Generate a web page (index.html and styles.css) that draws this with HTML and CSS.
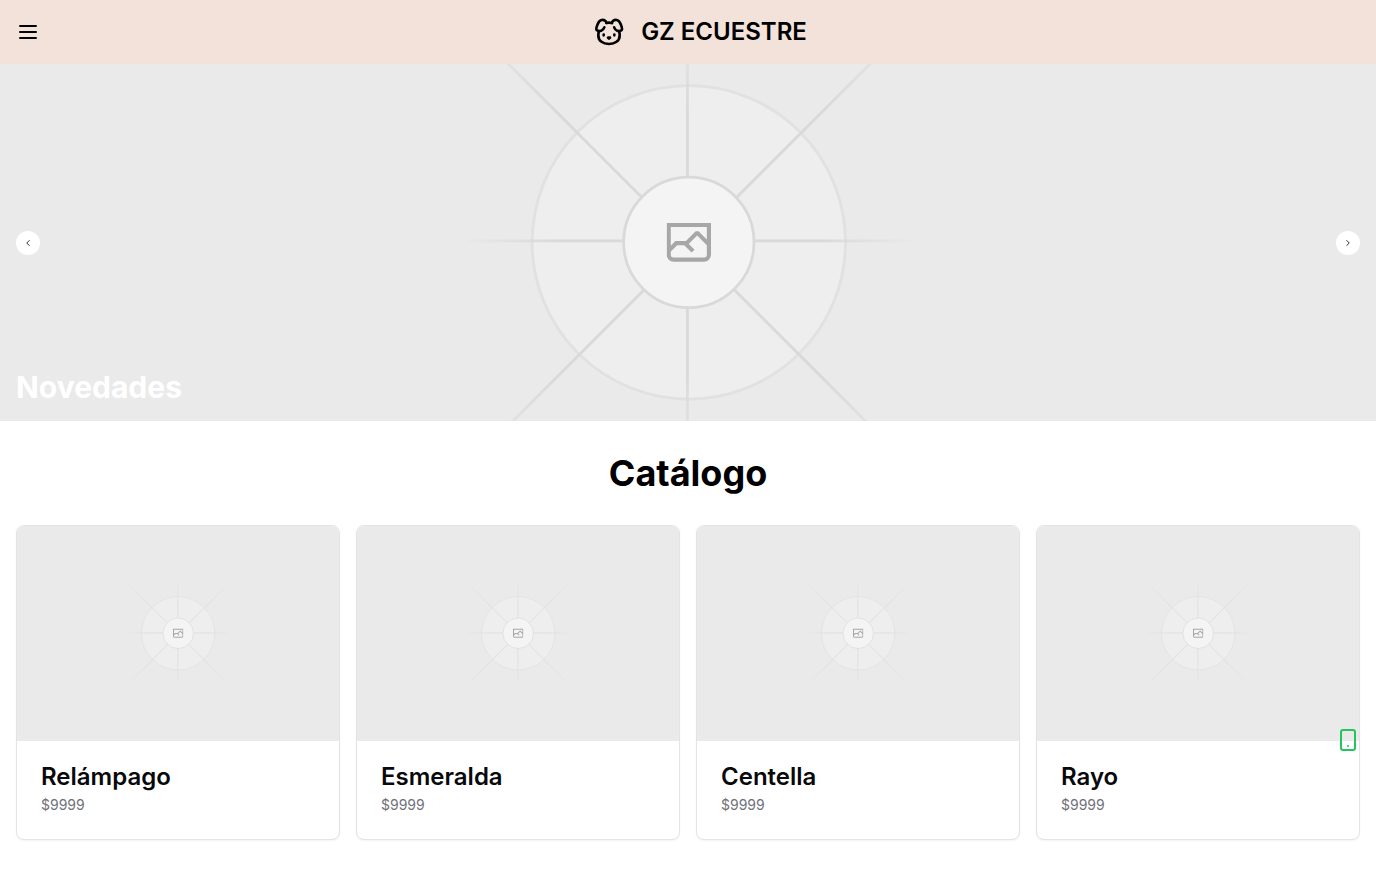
FILE: index.html
```html
<!DOCTYPE html>
<html lang="es">
<head>
<meta charset="utf-8">
<meta name="viewport" content="width=device-width, initial-scale=1">
<title>GZ Ecuestre</title>
<link rel="stylesheet" href="styles.css">
</head>
<body>
<svg class="sprite" aria-hidden="true">
  <defs>
    <linearGradient id="ray-a" x1="405" x2="797" y1="797" y2="405" gradientUnits="userSpaceOnUse"><stop stop-color="#c9c9c9" stop-opacity="0"/><stop offset=".208" stop-color="#c9c9c9"/><stop offset=".792" stop-color="#c9c9c9"/><stop offset="1" stop-color="#c9c9c9" stop-opacity="0"/></linearGradient>
    <linearGradient id="ray-b" x1="796.912" x2="404.507" y1="599.963" y2="599.965" gradientUnits="userSpaceOnUse"><stop stop-color="#c9c9c9" stop-opacity="0"/><stop offset=".208" stop-color="#c9c9c9"/><stop offset=".792" stop-color="#c9c9c9"/><stop offset="1" stop-color="#c9c9c9" stop-opacity="0"/></linearGradient>
    <linearGradient id="ray-c" x1="600.792" x2="600.794" y1="403.677" y2="796.082" gradientUnits="userSpaceOnUse"><stop stop-color="#c9c9c9" stop-opacity="0"/><stop offset=".208" stop-color="#c9c9c9"/><stop offset=".792" stop-color="#c9c9c9"/><stop offset="1" stop-color="#c9c9c9" stop-opacity="0"/></linearGradient>
    <linearGradient id="ray-d" x1="404.85" x2="796.972" y1="403.903" y2="796.02" gradientUnits="userSpaceOnUse"><stop stop-color="#c9c9c9" stop-opacity="0"/><stop offset=".208" stop-color="#c9c9c9"/><stop offset=".792" stop-color="#c9c9c9"/><stop offset="1" stop-color="#c9c9c9" stop-opacity="0"/></linearGradient>
    <clipPath id="picture-clip"><path d="M581.364 580.535h38.689v38.689h-38.689z"/></clipPath>
  </defs>
  <g id="placeholder" fill="none">
    <rect width="1200" height="1200" fill="#eaeaea"/>
    <g opacity=".5">
      <g opacity=".5"><circle cx="600.709" cy="599.88" r="136.62" fill="#fafafa" stroke="#c9c9c9" stroke-width="2.418"/></g>
      <g stroke-width="2.418">
        <path stroke="url(#ray-a)" d="M405.8 797.2 797.2 405.8"/>
        <path stroke="url(#ray-b)" d="M404.846 598.671h391.726"/>
        <path stroke="url(#ray-c)" d="M599.5 795.742V404.017"/>
        <path stroke="url(#ray-d)" d="m795.717 796.597-391.441-391.44"/>
      </g>
      <circle cx="600.709" cy="599.88" r="56.825" fill="#fff" stroke="#c9c9c9" stroke-width="2.418"/>
      <g clip-path="url(#picture-clip)"><path fill="#666" fill-rule="evenodd" d="M616.426 586.58h-31.434v16.176l3.553-3.554.531-.531h9.068l.074-.074 8.463-8.463h2.565l7.18 7.181V586.58Zm-15.715 14.654 3.698 3.699 1.283 1.282-2.565 2.565-1.282-1.283-5.2-5.199h-6.066l-5.514 5.514-.073.073v2.876a2.418 2.418 0 0 0 2.418 2.418h26.598a2.418 2.418 0 0 0 2.418-2.418v-8.317l-8.463-8.463-7.181 7.181-.071.072Zm-19.347 5.442v4.085a6.045 6.045 0 0 0 6.046 6.045h26.598a6.044 6.044 0 0 0 6.045-6.045v-7.108l1.356-1.355-1.282-1.283-.074-.073v-17.989h-38.689v23.43l-.146.146.146.147Z"/></g>
    </g>
  </g>
</svg>

<header class="header">
  <button class="icon-button" type="button" aria-label="Abrir menú">
    <svg class="icon" viewBox="0 0 24 24"><path d="M4 12h16M4 6h16M4 18h16"/></svg>
  </button>
  <div class="brand">
    <svg class="icon brand-logo" viewBox="0 0 24 24" aria-hidden="true"><path d="M10 5.172C10 3.782 8.423 2.679 6.5 3c-2.823.47-4.113 6.006-4 7 .08.703 1.725 1.722 3.656 1 1.261-.472 1.96-1.45 2.344-2.5"/><path d="M14.267 5.172c0-1.39 1.577-2.493 3.5-2.172 2.823.47 4.113 6.006 4 7-.08.703-1.725 1.722-3.656 1-1.261-.472-1.855-1.45-2.239-2.5"/><path d="M8 14v.5M16 14v.5"/><path d="M11.25 16.25h1.5L12 17l-.75-.75Z"/><path d="M4.42 11.247A13.152 13.152 0 0 0 4 14.556C4 18.728 7.582 21 12 21s8-2.272 8-6.444c0-1.061-.162-2.2-.493-3.309m-9.243-6.082A8.801 8.801 0 0 1 12 5c.78 0 1.5.108 2.161.306"/></svg>
    <span class="brand-name">GZ ECUESTRE</span>
  </div>
  <div></div>
</header>

<main>
  <section class="hero" aria-label="Novedades">
    <svg class="hero-image" viewBox="0 0 1200 1200" preserveAspectRatio="xMidYMid slice" aria-hidden="true"><use href="#placeholder"/></svg>
    <div class="hero-controls">
      <button class="arrow" type="button" aria-label="Anterior"><svg class="icon arrow-icon" viewBox="0 0 24 24"><path d="m15 18-6-6 6-6"/></svg></button>
      <button class="arrow" type="button" aria-label="Siguiente"><svg class="icon arrow-icon" viewBox="0 0 24 24"><path d="m9 18 6-6-6-6"/></svg></button>
    </div>
    <h2 class="hero-title">Novedades</h2>
  </section>

  <section class="catalog">
    <h1 class="catalog-title">Catálogo</h1>
    <div class="grid">
      <article class="card">
        <svg class="card-image" viewBox="0 0 1200 1200" preserveAspectRatio="xMidYMid slice" aria-hidden="true"><use href="#placeholder"/></svg>
        <div class="card-body"><h3 class="card-title">Relámpago</h3><p class="price">$9999</p></div>
      </article>
      <article class="card">
        <svg class="card-image" viewBox="0 0 1200 1200" preserveAspectRatio="xMidYMid slice" aria-hidden="true"><use href="#placeholder"/></svg>
        <div class="card-body"><h3 class="card-title">Esmeralda</h3><p class="price">$9999</p></div>
      </article>
      <article class="card">
        <svg class="card-image" viewBox="0 0 1200 1200" preserveAspectRatio="xMidYMid slice" aria-hidden="true"><use href="#placeholder"/></svg>
        <div class="card-body"><h3 class="card-title">Centella</h3><p class="price">$9999</p></div>
      </article>
      <article class="card">
        <svg class="card-image" viewBox="0 0 1200 1200" preserveAspectRatio="xMidYMid slice" aria-hidden="true"><use href="#placeholder"/></svg>
        <div class="card-body"><h3 class="card-title">Rayo</h3><p class="price">$9999</p></div>
      </article>
    </div>
  </section>
</main>

<a class="contact" href="#contacto" aria-label="Contacto">
  <svg class="icon" viewBox="0 0 24 24"><rect x="5" y="2" width="14" height="20" rx="2"/><path d="M12 18h.01"/></svg>
</a>
</body>
</html>
```

FILE: styles.css
```css
* {
  box-sizing: border-box;
}

body,
h1,
h2,
h3,
p {
  margin: 0;
}

body {
  background: #fff;
  color: #09090b;
  font-family: Inter, "Liberation Sans", sans-serif;
  font-size: 16px;
  line-height: 24px;
}

button {
  padding: 0;
  border: 0;
  color: inherit;
  cursor: pointer;
}

.sprite {
  position: absolute;
  width: 0;
  height: 0;
}

.icon {
  display: block;
  width: 24px;
  height: 24px;
  fill: none;
  stroke: currentColor;
  stroke-width: 2;
  stroke-linecap: round;
  stroke-linejoin: round;
}

.header {
  display: flex;
  align-items: center;
  justify-content: space-between;
  min-height: 64px;
  padding: 16px;
  background: #f3e2da;
  color: #000;
}

.icon-button {
  background: none;
}

.brand {
  display: flex;
  align-items: center;
  gap: 16px;
}

.brand-logo {
  width: 32px;
  height: 32px;
}

.brand-name {
  font-size: 24px;
  font-weight: 600;
  line-height: 32px;
}

.hero {
  position: relative;
  display: flex;
  align-items: flex-end;
  min-height: 357px;
  padding: 16px;
}

.hero-image {
  position: absolute;
  inset: 0;
  width: 100%;
  height: 100%;
}

.hero-controls {
  position: absolute;
  inset: 0;
  display: flex;
  align-items: center;
  justify-content: space-between;
  padding: 0 16px;
}

.hero-title {
  position: relative;
  color: #fff;
  font-size: 30px;
  font-weight: 700;
  line-height: 36px;
}

.arrow {
  display: grid;
  place-items: center;
  width: 24px;
  height: 24px;
  border-radius: 50%;
  background: #fff;
}

.arrow-icon {
  width: 10px;
  height: 10px;
}

.catalog {
  padding: 32px 16px;
}

.catalog-title {
  margin-bottom: 32px;
  color: #000;
  font-size: 36px;
  font-weight: 700;
  line-height: 40px;
  text-align: center;
}

.grid {
  display: grid;
  grid-template-columns: repeat(4, 1fr);
  gap: 16px;
}

.card {
  overflow: hidden;
  border: 1px solid #e4e4e7;
  border-radius: 8px;
  background: #fff;
  box-shadow: 0 1px 2px rgba(0, 0, 0, 0.05);
}

.card-image {
  display: block;
  width: 100%;
  aspect-ratio: 3 / 2;
}

.card-body {
  display: flex;
  flex-direction: column;
  gap: 6px;
  padding: 24px;
}

.card-title {
  font-size: 24px;
  font-weight: 600;
  line-height: 24px;
}

.price {
  color: #71717a;
  font-size: 14px;
  line-height: 20px;
}

.contact {
  position: fixed;
  right: 16px;
  bottom: 120px;
  color: #22c55e;
}
```
